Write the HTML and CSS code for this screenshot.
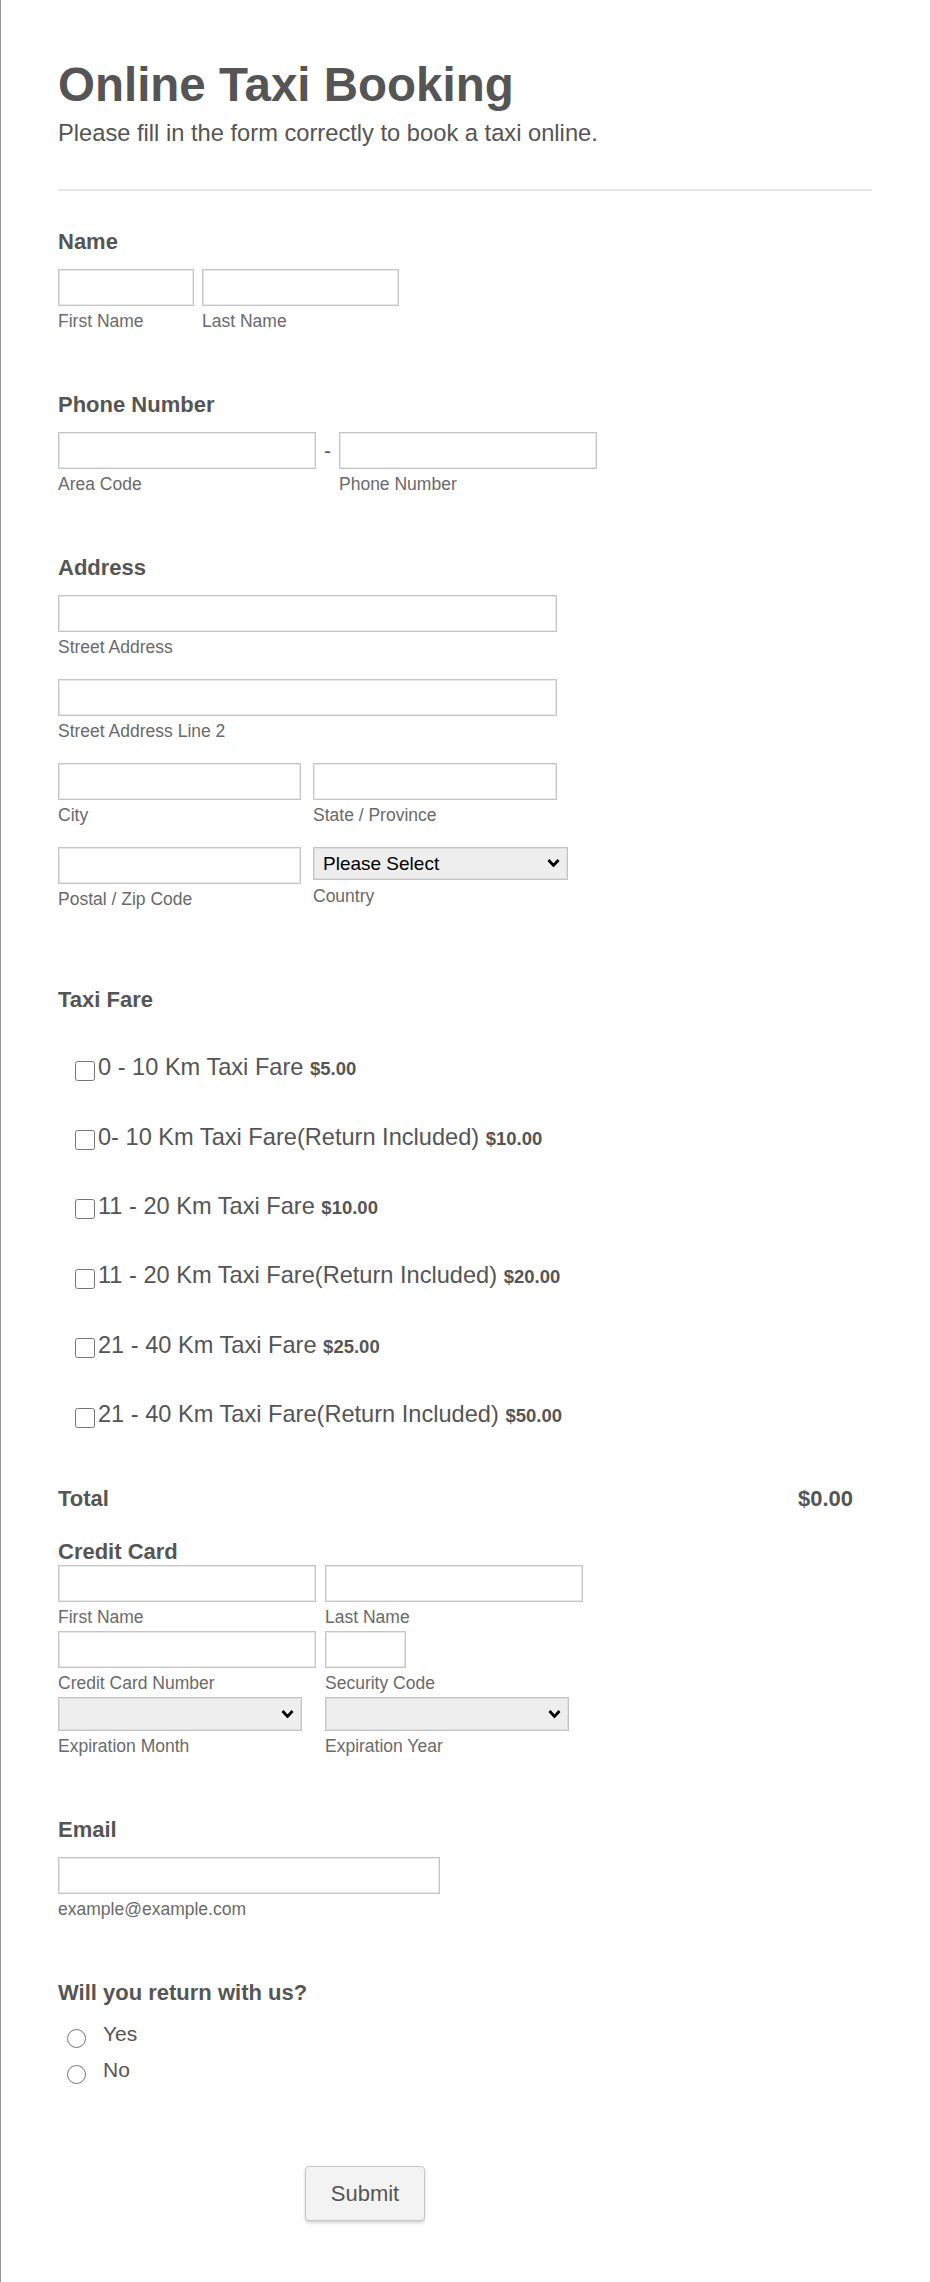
FILE: index.html
```html
<!DOCTYPE html>
<html lang="en">
<head>
  <meta charset="UTF-8" />
  <title>Online Taxi Booking</title>
  <link rel="stylesheet" href="styles.css">
</head>
<body>

  <form class="booking-form">

    <div class="form-header">
      <h1>Online Taxi Booking</h1>
      <p class="subheader">Please fill in the form correctly to book a taxi online.</p>
    </div>

    <!-- Name -->
    <div class="form-line first-line">
      <label class="form-label">Name</label>
      <div class="field-row">
        <span class="sub-field">
          <input type="text" class="input-first" />
          <label class="sublabel">First Name</label>
        </span>
        <span class="sub-field">
          <input type="text" class="input-last" />
          <label class="sublabel">Last Name</label>
        </span>
      </div>
    </div>

    <!-- Phone -->
    <div class="form-line">
      <label class="form-label">Phone Number</label>
      <div class="field-row phone-row">
        <span class="sub-field">
          <input type="text" class="input-phone" />
          <label class="sublabel">Area Code</label>
        </span>
        <span class="phone-dash">-</span>
        <span class="sub-field">
          <input type="text" class="input-phone" />
          <label class="sublabel">Phone Number</label>
        </span>
      </div>
    </div>

    <!-- Address -->
    <div class="form-line">
      <label class="form-label">Address</label>
      <div class="address-rows">
        <span class="sub-field">
          <input type="text" class="input-street" />
          <label class="sublabel">Street Address</label>
        </span>
        <span class="sub-field">
          <input type="text" class="input-street" />
          <label class="sublabel">Street Address Line 2</label>
        </span>
        <div class="field-row address-pair">
          <span class="sub-field">
            <input type="text" class="input-city" />
            <label class="sublabel">City</label>
          </span>
          <span class="sub-field">
            <input type="text" class="input-state" />
            <label class="sublabel">State / Province</label>
          </span>
        </div>
        <div class="field-row address-pair">
          <span class="sub-field">
            <input type="text" class="input-city" />
            <label class="sublabel">Postal / Zip Code</label>
          </span>
          <span class="sub-field">
            <span class="select-wrap">
              <select class="select-country">
                <option>Please Select</option>
                <option>United States</option>
                <option>United Kingdom</option>
                <option>Canada</option>
              </select>
              <svg class="chevron" width="13" height="9" viewBox="0 0 13 9"><path d="M1.5 1.5 L6.5 7 L11.5 1.5" fill="none" stroke="#000" stroke-width="2.8"/></svg>
            </span>
            <label class="sublabel country-label">Country</label>
          </span>
        </div>
      </div>
    </div>

    <!-- Taxi fare -->
    <div class="form-line fare-line">
      <label class="form-label">Taxi Fare</label>
      <div class="option-list">
        <label class="option"><input type="checkbox" /><span>0 - 10 Km Taxi Fare <b class="price">$5.00</b></span></label>
        <label class="option"><input type="checkbox" /><span>0- 10 Km Taxi Fare(Return Included) <b class="price">$10.00</b></span></label>
        <label class="option"><input type="checkbox" /><span>11 - 20 Km Taxi Fare <b class="price">$10.00</b></span></label>
        <label class="option"><input type="checkbox" /><span>11 - 20 Km Taxi Fare(Return Included) <b class="price">$20.00</b></span></label>
        <label class="option"><input type="checkbox" /><span>21 - 40 Km Taxi Fare <b class="price">$25.00</b></span></label>
        <label class="option"><input type="checkbox" /><span>21 - 40 Km Taxi Fare(Return Included) <b class="price">$50.00</b></span></label>
      </div>
      <div class="total-line">
        <span>Total</span>
        <span>$0.00</span>
      </div>
    </div>

    <!-- Credit card -->
    <div class="form-line card-line">
      <label class="form-label tight">Credit Card</label>
      <div class="card-grid">
        <span class="sub-field">
          <input type="text" class="input-card" />
          <label class="sublabel">First Name</label>
        </span>
        <span class="sub-field">
          <input type="text" class="input-card" />
          <label class="sublabel">Last Name</label>
        </span>
        <span class="sub-field">
          <input type="text" class="input-card" />
          <label class="sublabel">Credit Card Number</label>
        </span>
        <span class="sub-field">
          <input type="text" class="input-cvv" />
          <label class="sublabel">Security Code</label>
        </span>
        <span class="sub-field">
          <span class="select-wrap">
            <select class="select-exp">
              <option></option>
            </select>
            <svg class="chevron" width="13" height="9" viewBox="0 0 13 9"><path d="M1.5 1.5 L6.5 7 L11.5 1.5" fill="none" stroke="#000" stroke-width="2.8"/></svg>
          </span>
          <label class="sublabel">Expiration Month</label>
        </span>
        <span class="sub-field">
          <span class="select-wrap">
            <select class="select-exp">
              <option></option>
            </select>
            <svg class="chevron" width="13" height="9" viewBox="0 0 13 9"><path d="M1.5 1.5 L6.5 7 L11.5 1.5" fill="none" stroke="#000" stroke-width="2.8"/></svg>
          </span>
          <label class="sublabel">Expiration Year</label>
        </span>
      </div>
    </div>

    <!-- Email -->
    <div class="form-line">
      <label class="form-label">Email</label>
      <span class="sub-field">
        <input type="text" class="input-email" />
        <label class="sublabel">example@example.com</label>
      </span>
    </div>

    <!-- Return -->
    <div class="form-line">
      <label class="form-label">Will you return with us?</label>
      <div class="radio-list">
        <label class="radio-option"><input type="radio" name="return" /><span>Yes</span></label>
        <label class="radio-option"><input type="radio" name="return" /><span>No</span></label>
      </div>
    </div>

    <div class="submit-row">
      <button type="submit" class="submit-btn">Submit</button>
    </div>

  </form>

</body>
</html>
```

FILE: styles.css
```css
* {
  box-sizing: border-box;
}

body {
  margin: 0;
  min-height: 2282px;
  border-left: 1px solid #9b9b9b;
  background: #fff;
  color: #555;
  font-family: "Liberation Sans", Arial, sans-serif;
}

.booking-form {
  width: 871px;
  padding: 57px 0 0 57px;
}

/* header */
.form-header {
  padding-bottom: 42px;
  border-bottom: 2px solid #e6e6e6;
}

h1 {
  margin: 0;
  font-size: 47.5px;
  line-height: 56px;
  font-weight: bold;
  color: #555;
}

.subheader {
  margin: 6px 0 0;
  font-size: 23.7px;
  line-height: 28px;
}

/* lines */
.form-line {
  margin-top: 61px;
}

.form-line.first-line {
  margin-top: 37.5px;
}

.form-line.fare-line {
  margin-top: 78px;
}

.form-line.card-line {
  margin-top: 0;
}

.form-label {
  display: block;
  margin-bottom: 14px;
  font-size: 22px;
  line-height: 26px;
  font-weight: bold;
  color: #555;
}

.form-label.tight {
  margin-bottom: 0;
}

.field-row {
  display: flex;
  align-items: flex-start;
  gap: 8px;
}

.sub-field {
  display: flex;
  flex-direction: column;
  align-items: flex-start;
}

.sublabel {
  margin-top: 5px;
  font-size: 17.5px;
  line-height: 20px;
  color: #6a6a6a;
}

input[type="text"] {
  height: 37px;
  padding: 0 8px;
  border: 1px solid #c6c6c6;
  box-shadow: inset 0 0 0 1px #e8e8e8;
  background: #fff;
  font: inherit;
  font-size: 18px;
}

.input-first { width: 136px; }
.input-last { width: 197px; }
.input-phone { width: 258px; }
.input-street { width: 499px; }
.input-city { width: 243px; }
.input-state { width: 244px; }
.input-card { width: 258px; }
.input-cvv { width: 81px; }
.input-email { width: 382px; }

.phone-row {
  gap: 0;
}

.phone-dash {
  width: 23px;
  text-align: center;
  font-size: 21px;
  line-height: 37px;
}

.address-rows {
  display: flex;
  flex-direction: column;
  gap: 22px;
}

.address-pair {
  gap: 12px;
}

/* selects */
.select-wrap {
  position: relative;
  display: inline-block;
}

select {
  appearance: none;
  -webkit-appearance: none;
  display: block;
  height: 33px;
  padding: 0 30px 0 9px;
  border: 1px solid #c4c4c4;
  box-shadow: inset 0 0 0 1px #dedede;
  border-radius: 0;
  background: #eee;
  color: #000;
  font-family: "Liberation Sans", Arial, sans-serif;
  font-size: 19px;
}

.select-country { width: 255px; }
.select-exp { width: 244px; height: 34px; }

.chevron {
  position: absolute;
  right: 8px;
  top: 50%;
  transform: translateY(-50%);
  pointer-events: none;
}

.country-label {
  margin-top: 6px;
}

/* fare options */
.option-list {
  padding-top: 7px;
}

.option {
  display: flex;
  align-items: center;
  height: 69.4px;
  padding-left: 17px;
  font-size: 23.6px;
  line-height: 28px;
  color: #555;
}

.option input[type="checkbox"] {
  width: 20px;
  height: 20px;
  margin: 5px 3px 0 0;
}

.price {
  font-size: 18.5px;
  font-weight: bold;
}

.total-line {
  display: flex;
  justify-content: space-between;
  margin-top: 36px;
  padding-right: 19px;
  font-size: 22px;
  line-height: 26px;
  font-weight: bold;
}

/* credit card */
.card-line {
  padding-top: 27px;
}

.card-grid {
  display: grid;
  grid-template-columns: 258px 258px;
  column-gap: 9px;
  row-gap: 4px;
}

/* radios */
.radio-list {
  display: flex;
  flex-direction: column;
  gap: 10.5px;
  padding-top: 1px;
}

.radio-option {
  display: flex;
  align-items: center;
  height: 26px;
  padding-left: 9px;
  font-size: 21px;
}

.radio-option input[type="radio"] {
  width: 19px;
  height: 19px;
  margin: 9px 17px 0 0;
}

/* submit */
.submit-row {
  margin-top: 83px;
  padding-left: 247px;
}

.submit-btn {
  width: 120px;
  height: 55px;
  border: 1px solid #c6c6c6;
  border-radius: 4px;
  background: #f3f3f3;
  box-shadow: 0 2px 3px rgba(0, 0, 0, 0.18);
  color: #555;
  font-family: "Liberation Sans", Arial, sans-serif;
  font-size: 22px;
  cursor: pointer;
}
```
